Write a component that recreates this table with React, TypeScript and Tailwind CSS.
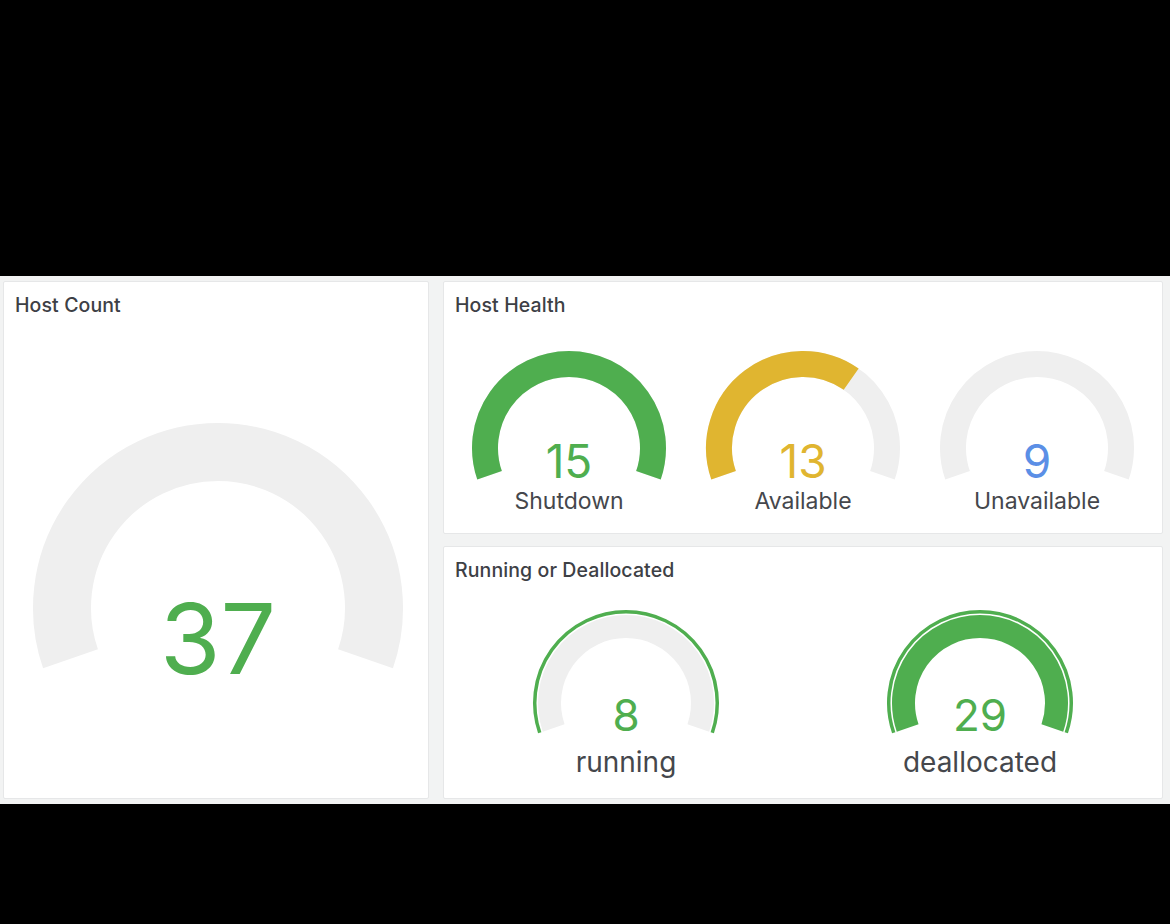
const GREEN = "#4fae4f";
const TRACK = "#efefef";

// angle in degrees from top, clockwise
const arcPath = (cx: number, cy: number, r: number, a0: number, a1: number) => {
  const pt = (a: number) => {
    const rad = (a * Math.PI) / 180;
    return [cx + r * Math.sin(rad), cy - r * Math.cos(rad)];
  };
  const [x0, y0] = pt(a0);
  const [x1, y1] = pt(a1);
  const large = a1 - a0 > 180 ? 1 : 0;
  return `M ${x0} ${y0} A ${r} ${r} 0 ${large} 1 ${x1} ${y1}`;
};

const START = -109;
const END = 109;

type GaugeProps = {
  value: string;
  color: string;
  textColor: string;
  fillTo: number | null;
};

const HealthGauge = ({ value, color, textColor, fillTo }: GaugeProps) => (
  <svg width="200" height="140" viewBox="0 0 200 140">
    <path d={arcPath(100, 99, 84, START, END)} fill="none" stroke={TRACK} strokeWidth="26" />
    {fillTo !== null && (
      <path d={arcPath(100, 99, 84, START, fillTo)} fill="none" stroke={color} strokeWidth="26" />
    )}
    <text
      x="100"
      y="129"
      textAnchor="middle"
      fontSize="46"
      fill={textColor}
      style={{ fontFamily: "Inter, 'Noto Sans', sans-serif" }}
    >
      {value}
    </text>
  </svg>
);

const StateGauge = ({ value, filled }: { value: string; filled: boolean }) => (
  <svg width="196" height="136" viewBox="0 0 196 136">
    <path d={arcPath(98, 96, 91.25, START, END)} fill="none" stroke={GREEN} strokeWidth="3.5" />
    <path d={arcPath(98, 96, 76.5, START, END)} fill="none" stroke={filled ? GREEN : TRACK} strokeWidth="23" />
    <text
      x="98"
      y="124"
      textAnchor="middle"
      fontSize="44"
      fill={GREEN}
      style={{ fontFamily: "Inter, 'Noto Sans', sans-serif" }}
    >
      {value}
    </text>
  </svg>
);

const PanelTitle = ({ children }: { children: string }) => (
  <div className="px-[11px] pt-[11px] text-[19.5px] leading-[24px] font-medium tracking-[0.1px] text-[#3d4045]">
    {children}
  </div>
);

export default function App() {
  const health = [
    { label: "Shutdown", value: "15", color: GREEN, text: GREEN, fillTo: END },
    { label: "Available", value: "13", color: "#e0b530", text: "#e0b530", fillTo: 35 },
    { label: "Unavailable", value: "9", color: TRACK, text: "#5b8fe6", fillTo: null },
  ];

  const states = [
    { label: "running", value: "8", filled: false },
    { label: "deallocated", value: "29", filled: true },
  ];

  return (
    <div className="h-[924px] bg-black flex flex-col" style={{ fontFamily: "Inter, 'Noto Sans', sans-serif" }}>
      <div className="h-[276px] shrink-0" />

      <div className="h-[528px] shrink-0 bg-[#f2f3f3] pl-[3px] pr-[7px] pt-[5px] pb-[5px]">
        <div className="grid h-full grid-cols-[426px_720px] grid-rows-[253px_253px] gap-x-[14px] gap-y-[12px]">
          {/* Host Count */}
          <div className="row-span-2 bg-white border border-[#e6e7e8] rounded-[2px] flex flex-col">
            <PanelTitle>Host Count</PanelTitle>
            <div className="flex justify-center pl-[4px] mt-[101px]">
              <svg width="380" height="280" viewBox="0 0 380 280">
                <path d={arcPath(190, 190, 156, START, END)} fill="none" stroke={TRACK} strokeWidth="58" />
                <text
                  x="190"
                  y="256"
                  textAnchor="middle"
                  fontSize="98"
                  fill={GREEN}
                  style={{ fontFamily: "Inter, 'Noto Sans', sans-serif" }}
                >
                  37
                </text>
              </svg>
            </div>
          </div>

          {/* Host Health */}
          <div className="bg-white border border-[#e6e7e8] rounded-[2px] flex flex-col">
            <PanelTitle>Host Health</PanelTitle>
            <div className="grid grid-cols-3 px-[8px] mt-[32px]">
              {health.map((g) => (
                <div key={g.label} className="flex flex-col items-center">
                  <HealthGauge value={g.value} color={g.color} textColor={g.text} fillTo={g.fillTo} />
                  <div className="text-[23px] leading-[24px] text-[#45474c]">{g.label}</div>
                </div>
              ))}
            </div>
          </div>

          {/* Running or Deallocated */}
          <div className="bg-white border border-[#e6e7e8] rounded-[2px] flex flex-col">
            <PanelTitle>Running or Deallocated</PanelTitle>
            <div className="grid grid-cols-2 px-[5px] mt-[25px]">
              {states.map((s) => (
                <div key={s.label} className="flex flex-col items-center">
                  <StateGauge value={s.value} filled={s.filled} />
                  <div className="mt-[4px] text-[28px] leading-[30px] text-[#45474c]">{s.label}</div>
                </div>
              ))}
            </div>
          </div>
        </div>
      </div>

      <div className="flex-1" />
    </div>
  );
}
